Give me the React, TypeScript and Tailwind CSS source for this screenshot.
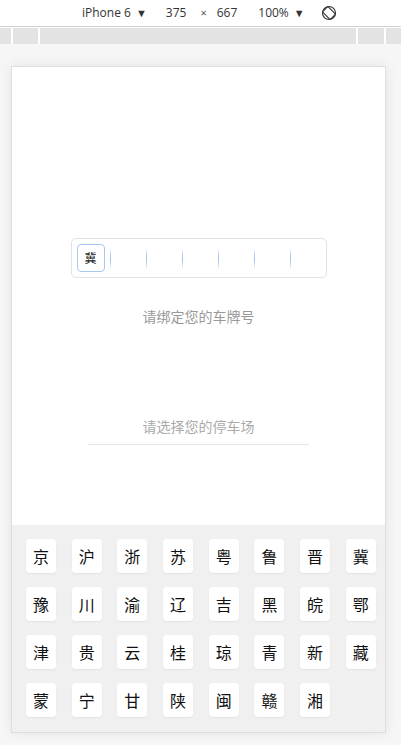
import React from "react";

const rows = [
  ["京", "沪", "浙", "苏", "粤", "鲁", "晋", "冀"],
  ["豫", "川", "渝", "辽", "吉", "黑", "皖", "鄂"],
  ["津", "贵", "云", "桂", "琼", "青", "新", "藏"],
  ["蒙", "宁", "甘", "陕", "闽", "赣", "湘"],
];

const cjk = { fontFamily: '"Noto Sans CJK SC", "Noto Sans", sans-serif' };
const ui = { fontFamily: '"Open Sans", "Liberation Sans", sans-serif' };

function RotateIcon() {
  return (
    <svg width="16" height="16" viewBox="0 0 16 16" fill="none" stroke="#333" strokeWidth="1.1">
      <circle cx="8" cy="8" r="6.5" />
      <rect x="4.2" y="2.6" width="7.6" height="10.8" rx="1" transform="rotate(-45 8 8)" />
    </svg>
  );
}

export default function App() {
  return (
    <div className="w-[401px] h-[745px] bg-[#f6f6f6] flex flex-col overflow-hidden" style={ui}>
      <div className="h-[26px] bg-white flex items-center text-[12px] text-[#333]">
        <span className="ml-[82px]">iPhone 6</span>
        <span className="ml-[5px] text-[11px]">▼</span>
        <span className="ml-[19px]">375</span>
        <span className="ml-[14px] text-[11px] text-[#555]">×</span>
        <span className="ml-[10px]">667</span>
        <span className="ml-[21px]">100%</span>
        <span className="ml-[5px] text-[11px]">▼</span>
        <span className="ml-[16px] flex items-center"><RotateIcon /></span>
      </div>
      <div className="h-px bg-[#cfcfcf]" />
      <div className="h-px bg-white" />
      <div className="h-[16px] bg-[#e3e3e3] flex">
        <div className="w-[11px]" />
        <div className="w-[2px] bg-white" />
        <div className="w-[25px]" />
        <div className="w-[2px] bg-white" />
        <div className="w-[316px]" />
        <div className="w-[2px] bg-white" />
        <div className="w-[26px]" />
        <div className="w-[2px] bg-white" />
      </div>
      <div className="pl-[11px] pt-[22px]">
        <div className="w-[375px] h-[667px] bg-white border border-[#dedede] shadow-[0_0_12px_rgba(0,0,0,0.08)] flex flex-col" style={cjk}>
          <div className="h-[458px] flex flex-col items-center">
            <div className="mt-[171px] w-[256px] h-[40px] border border-[#e2e2e2] rounded-[5px] flex items-center pl-[5px]">
              <div className="w-[28px] h-[28px] border border-[#a9c6f2] rounded-[4px] flex items-center justify-center text-[12px] text-[#222]">
                冀
              </div>
              <div className="flex ml-[-12px]">
                {[0, 1, 2, 3, 4, 5].map((i) => (
                  <div key={i} className="flex items-center justify-center w-[36px]">
                    <div className="w-px h-[19px] bg-gradient-to-b from-[#e8f0fc] via-[#9cbdf0] to-[#e8f0fc]" />
                  </div>
                ))}
              </div>
            </div>
            <div className="mt-[28px] text-[14px] leading-[20px] text-[#999]">请绑定您的车牌号</div>
            <div className="mt-[90px] text-[14px] leading-[20px] text-[#aaa]">请选择您的停车场</div>
            <div className="mt-[8px] w-[221px] h-px bg-[#e6e6e6]" />
          </div>
          <div className="flex-1 bg-[#f0f0f0] pt-[14px] pl-[14px] flex flex-col gap-[14px]">
            {rows.map((r, ri) => (
              <div key={ri} className="flex gap-x-[15.7px]">
                {r.map((c) => (
                  <div
                    key={c}
                    className="w-[30px] h-[34px] bg-white rounded-[4px] shadow-[0_1px_2px_rgba(0,0,0,0.06)] flex items-center justify-center text-[16px] text-[#111]"
                  >
                    {c}
                  </div>
                ))}
              </div>
            ))}
          </div>
        </div>
      </div>
    </div>
  );
}
